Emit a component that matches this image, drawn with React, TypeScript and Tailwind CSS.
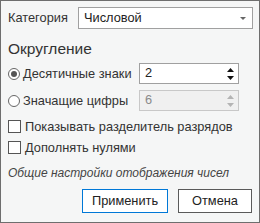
import React from "react";

function Spinner({ value, disabled }: { value: string; disabled?: boolean }) {
  return (
    <div
      className={`flex h-[21px] w-[100px] items-center border pl-[5px] pr-[4px] ${
        disabled ? "border-[#c8c8c8] bg-[#f0f0f0] text-[#8a8a8a]" : "border-[#a0a0a0] bg-white text-[#222]"
      }`}
    >
      <span className="flex-1 leading-none">{value}</span>
      <div className="flex flex-col items-center gap-[4px]">
        <svg width="7" height="4" viewBox="0 0 7 4">
          <path d="M0 4 L3.5 0 L7 4 Z" fill={disabled ? "#b4b4b4" : "#111"} />
        </svg>
        <svg width="7" height="4" viewBox="0 0 7 4">
          <path d="M0 0 L3.5 4 L7 0 Z" fill={disabled ? "#b4b4b4" : "#111"} />
        </svg>
      </div>
    </div>
  );
}

function Radio({ checked }: { checked?: boolean }) {
  return (
    <div className="flex h-[12px] w-[12px] shrink-0 items-center justify-center rounded-full border border-[#666] bg-white">
      {checked && <div className="h-[6px] w-[6px] rounded-full bg-[#555]" />}
    </div>
  );
}

function Check() {
  return <div className="h-[13px] w-[13px] shrink-0 border border-[#555] bg-white" />;
}

export default function App() {
  return (
    <div
      className="h-[223px] w-[260px] overflow-hidden whitespace-nowrap border border-[#6e6e6e] bg-[#f5f6f6] text-[12.8px] leading-[16px] text-[#333]"
      style={{ fontFamily: '"Liberation Sans", Arial, sans-serif' }}
    >
      <div className="flex flex-col px-[6px] pt-[6px]">
        <div className="flex h-[22px] items-center">
          <span className="w-[71px] pl-[1px]">Категория</span>
          <div className="flex h-[22px] flex-1 items-center border border-[#a0a0a0] bg-white pl-[5px] pr-[6px] text-[#222]">
            <span className="flex-1">Числовой</span>
            <svg width="6" height="3" viewBox="0 0 6 3">
              <path d="M0 0 L3 3 L6 0 Z" fill="#666" />
            </svg>
          </div>
        </div>
        <div className="mt-[9px] pl-[1px] text-[15.5px] leading-[22px]">Округление</div>
        <div className="mt-[3px] flex h-[21px] items-center">
          <div className="flex w-[132px] items-center gap-[3px] pl-[1px]">
            <Radio checked />
            <span>Десятичные знаки</span>
          </div>
          <Spinner value="2" />
        </div>
        <div className="mt-[6px] flex h-[21px] items-center">
          <div className="flex w-[132px] items-center gap-[3px] pl-[1px]">
            <Radio />
            <span>Значащие цифры</span>
          </div>
          <Spinner value="6" disabled />
        </div>
        <div className="mt-[9px] flex h-[13px] items-center gap-[4px] pl-[1px]">
          <Check />
          <span>Показывать разделитель разрядов</span>
        </div>
        <div className="mt-[8px] flex h-[13px] items-center gap-[4px] pl-[1px]">
          <Check />
          <span>Дополнять нулями</span>
        </div>
        <div className="mt-[11px] pl-[1px] text-[12px] italic text-[#444]">Общие настройки отображения чисел</div>
        <div className="mt-[8px] flex justify-end gap-[10px] pr-[1px]">
          <button className="h-[24px] w-[86px] border border-[#0078d7] bg-white text-[#222]">Применить</button>
          <button className="h-[24px] w-[74px] border border-[#5a5a5a] bg-white text-[#222]">Отмена</button>
        </div>
      </div>
    </div>
  );
}
